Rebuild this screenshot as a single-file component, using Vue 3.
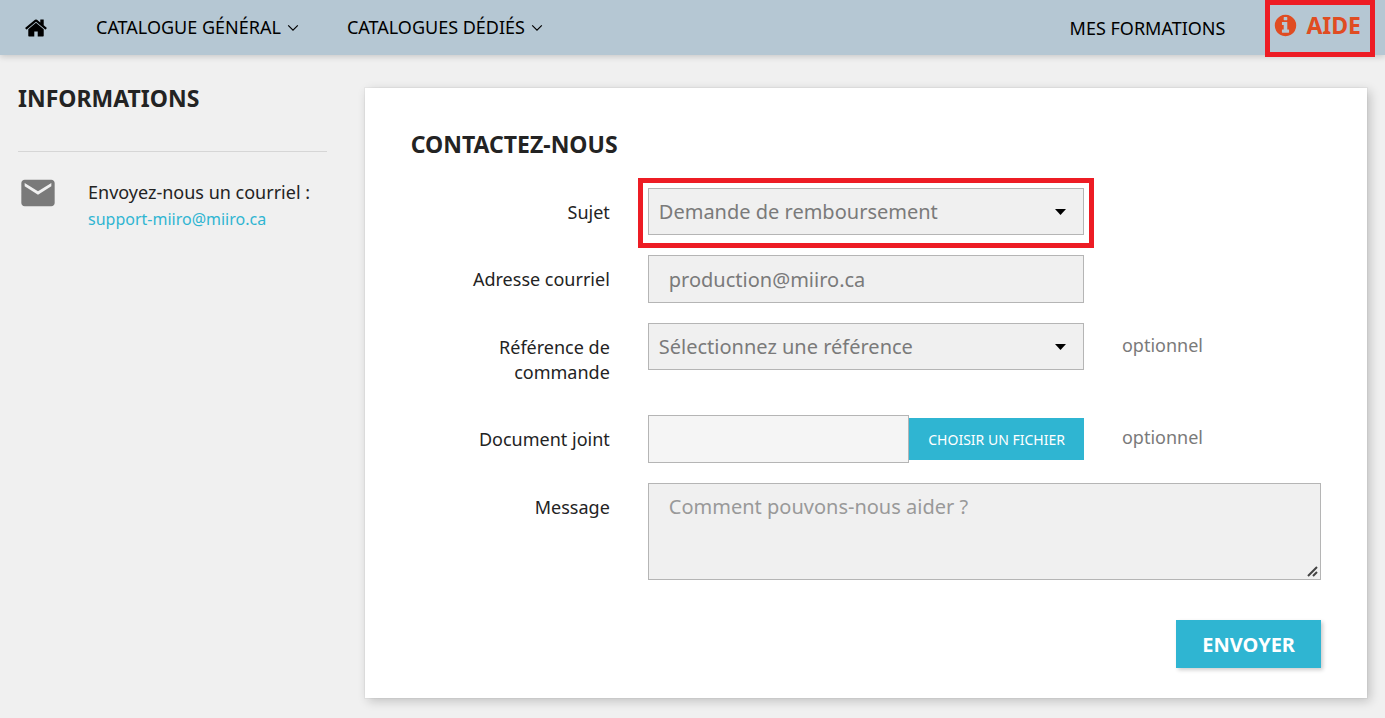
<script setup>
import { ref } from 'vue'

const catalogues = ['Catalogue général', 'Catalogues dédiés']
const subject = ref('refund')
const email = ref('production@miiro.ca')
const order = ref('')
const fileName = ref('')
const message = ref('')
</script>

<template>
  <div class="page">
    <header class="topbar">
      <nav class="menu">
        <a href="#" class="home" aria-label="Accueil">
          <svg width="24" height="24" viewBox="0 0 1792 1792" aria-hidden="true">
            <path d="M1472 992v480q0 26-19 45t-45 19h-384v-384h-256v384h-384q-26 0-45-19t-19-45v-480q0-1 .5-3t.5-3l575-474 575 474q1 2 1 6zm223-69l-62 74q-8 9-21 11h-3q-13 0-21-7l-692-577-692 577q-12 8-24 7-13-2-21-11l-62-74q-8-10-7-23.5t11-21.5l719-599q32-26 76-26t76 26l244 204v-195q0-14 9-23t23-9h192q14 0 23 9t9 23v408l219 182q10 8 11 21.5t-7 23.5z" />
          </svg>
        </a>
        <a v-for="name in catalogues" :key="name" href="#" class="link">
          {{ name }}
          <svg class="chevron" width="12" height="8" viewBox="0 0 12 8" aria-hidden="true">
            <path d="M1.2 1.4 6 6.2 10.8 1.4" />
          </svg>
        </a>
      </nav>
      <div class="account">
        <a href="#" class="link">Mes formations</a>
        <a href="#" class="help">
          <svg width="25" height="25" viewBox="0 0 1792 1792" aria-hidden="true">
            <path d="M1152 1376v-160q0-14-9-23t-23-9h-96v-512q0-14-9-23t-23-9h-320q-14 0-23 9t-9 23v160q0 14 9 23t23 9h96v320h-96q-14 0-23 9t-9 23v160q0 14 9 23t23 9h448q14 0 23-9t9-23zm-128-896v-160q0-14-9-23t-23-9h-192q-14 0-23 9t-9 23v160q0 14 9 23t23 9h192q14 0 23-9t9-23zm640 416q0 209-103 385.5t-279.5 279.5-385.5 103-385.5-103-279.5-279.5-103-385.5 103-385.5 279.5-279.5 385.5-103 385.5 103 279.5 279.5 103 385.5z" />
          </svg>
          Aide
        </a>
      </div>
    </header>

    <div class="columns">
      <aside class="infos">
        <h2>Informations</h2>
        <hr />
        <div class="mail">
          <svg width="40" height="40" viewBox="0 0 24 24" aria-hidden="true">
            <path d="M20 4H4c-1.100 0-2 .9-2 2v12c0 1.100.9 2 2 2h16c1.100 0 2-.9 2-2V6c0-1.100-.9-2-2-2zm0 4l-8 5-8-5V6l8 5 8-5v2z" />
          </svg>
          <p>
            Envoyez-nous un courriel :<br />
            <a href="mailto:support-miiro@miiro.ca">support-miiro@miiro.ca</a>
          </p>
        </div>
      </aside>

      <main class="card">
        <form @submit.prevent>
          <h1>Contactez-nous</h1>

          <div class="row">
            <label for="subject">Sujet</label>
            <div class="field select marked">
              <select id="subject" v-model="subject">
                <option value="refund">Demande de remboursement</option>
              </select>
              <svg width="11" height="6" viewBox="0 0 11 6" aria-hidden="true"><path d="M0 0h11L5.500 6z" /></svg>
            </div>
          </div>

          <div class="row">
            <label for="email">Adresse courriel</label>
            <div class="field"><input id="email" v-model="email" type="email" /></div>
          </div>

          <div class="row">
            <label for="order">Référence de commande</label>
            <div class="field select">
              <select id="order" v-model="order">
                <option value="">Sélectionnez une référence</option>
              </select>
              <svg width="11" height="6" viewBox="0 0 11 6" aria-hidden="true"><path d="M0 0h11L5.500 6z" /></svg>
            </div>
            <span class="note">optionnel</span>
          </div>

          <div class="row">
            <label for="file">Document joint</label>
            <div class="field file">
              <input id="file" v-model="fileName" type="text" readonly />
              <button type="button">Choisir un fichier</button>
            </div>
            <span class="note">optionnel</span>
          </div>

          <div class="row">
            <label for="message">Message</label>
            <div class="field wide">
              <textarea id="message" v-model="message" placeholder="Comment pouvons-nous aider ?"></textarea>
              <svg class="grip" width="12" height="12" viewBox="0 0 12 12" aria-hidden="true">
                <path d="M1 10 10 1M6 10 10 6" />
              </svg>
            </div>
          </div>

          <div class="actions">
            <button type="submit">Envoyer</button>
          </div>
        </form>
      </main>
    </div>
  </div>
</template>

<style>
body {
  background: #f0f0f0;
}
</style>

<style scoped>
.page,
.page * {
  box-sizing: border-box;
}

.page {
  min-height: 100vh;
  font: 18px/25px "Noto Sans", sans-serif;
  color: #232323;
}

a {
  text-decoration: none;
}

.topbar {
  display: flex;
  justify-content: space-between;
  align-items: center;
  height: 55px;
  padding: 0 10px 0 24px;
  background: #b5c7d3;
  box-shadow: 0 2px 6px rgba(0, 0, 0, 0.16);
}

.menu,
.account {
  display: flex;
  align-items: center;
}

.menu {
  gap: 48px;
}

.home {
  display: flex;
}

.link {
  display: flex;
  align-items: center;
  gap: 6px;
  color: #000;
  text-transform: uppercase;
}

.chevron path {
  fill: none;
  stroke: #000;
  stroke-width: 1.2;
}

.account {
  gap: 40px;
  align-self: flex-start;
}

.help {
  display: flex;
  align-items: center;
  gap: 8px;
  height: 57px;
  padding: 0 9px 6px 3px;
  border: 5px solid #ed1c24;
  color: #e04c22;
  font-size: 23px;
  font-weight: 700;
  text-transform: uppercase;
}

.help svg {
  fill: currentColor;
}

.columns {
  display: grid;
  grid-template-columns: repeat(12, 1fr);
  column-gap: 38px;
  align-items: start;
  padding: 33px 18px 19px;
}

.infos {
  grid-column: span 3;
}

h1,
h2 {
  margin: 0;
  font-size: 23px;
  line-height: 26px;
  font-weight: 700;
  text-transform: uppercase;
}

h2 {
  line-height: 20px;
}

hr {
  margin: 43px 0 21px;
  border: 0;
  border-top: 1px solid #d6d6d6;
}

.mail {
  display: flex;
  align-items: flex-start;
  gap: 30px;
}

.mail svg {
  flex: none;
  fill: #7a7a7a;
}

.mail p {
  margin: 6px 0 0;
  line-height: 26px;
}

.mail a {
  color: #2fb5d2;
  font-size: 16px;
}

.card {
  grid-column: span 9;
  padding: 43px 46px 30px;
  background: #fff;
  box-shadow: 0 0 0 1px rgba(0, 0, 0, 0.03), 3px 3px 10px rgba(0, 0, 0, 0.2);
}

h1 {
  margin-bottom: 31px;
}

.row {
  display: grid;
  grid-template-columns: repeat(12, 1fr);
  column-gap: 38px;
  align-items: start;
  margin-bottom: 20px;
}

.row label {
  grid-column: span 3;
  padding: 12px 0 10px;
  text-align: right;
}

.field {
  position: relative;
  grid-column: span 6;
  display: flex;
}

.wide {
  grid-column: span 9;
}

input,
select,
textarea {
  width: 100%;
  margin: 0;
  border: 1px solid #b5b5b5;
  border-radius: 0;
  background: #f0f0f0;
  color: #7a7a7a;
  font: 20px/26px "Noto Sans", sans-serif;
}

input {
  height: 48px;
  padding: 0 20px;
}

select {
  height: 47px;
  padding: 0 10px;
  appearance: none;
}

.select svg {
  position: absolute;
  top: 21px;
  right: 18px;
  pointer-events: none;
}

.marked::after {
  content: "";
  position: absolute;
  inset: -10px -10px -13px;
  border: 5px solid #ed1c24;
  pointer-events: none;
}

textarea {
  display: block;
  height: 97px;
  padding: 10px 20px;
  resize: vertical;
}

textarea::placeholder {
  color: #999;
}

textarea::-webkit-resizer {
  background: transparent;
}

.grip {
  position: absolute;
  right: 2px;
  bottom: 2px;
  fill: none;
  stroke: #444;
  stroke-width: 2;
  pointer-events: none;
}

.note {
  grid-column: span 3;
  padding-top: 10px;
  color: #7a7a7a;
}

.file {
  align-items: center;
}

.file input {
  flex: 1;
  min-width: 0;
  background: #f5f5f5;
}

button {
  border: 0;
  background: #2fb5d2;
  color: #fff;
  font-family: "Noto Sans", sans-serif;
  text-transform: uppercase;
}

.file button {
  flex: none;
  height: 42px;
  padding: 0 19px;
  font-size: 14px;
}

.actions {
  display: flex;
  justify-content: flex-end;
  margin-top: 40px;
}

.actions button {
  height: 48px;
  padding: 0 26px;
  box-shadow: 2px 2px 4px rgba(0, 0, 0, 0.2);
  font-size: 20px;
  font-weight: 700;
}
</style>
